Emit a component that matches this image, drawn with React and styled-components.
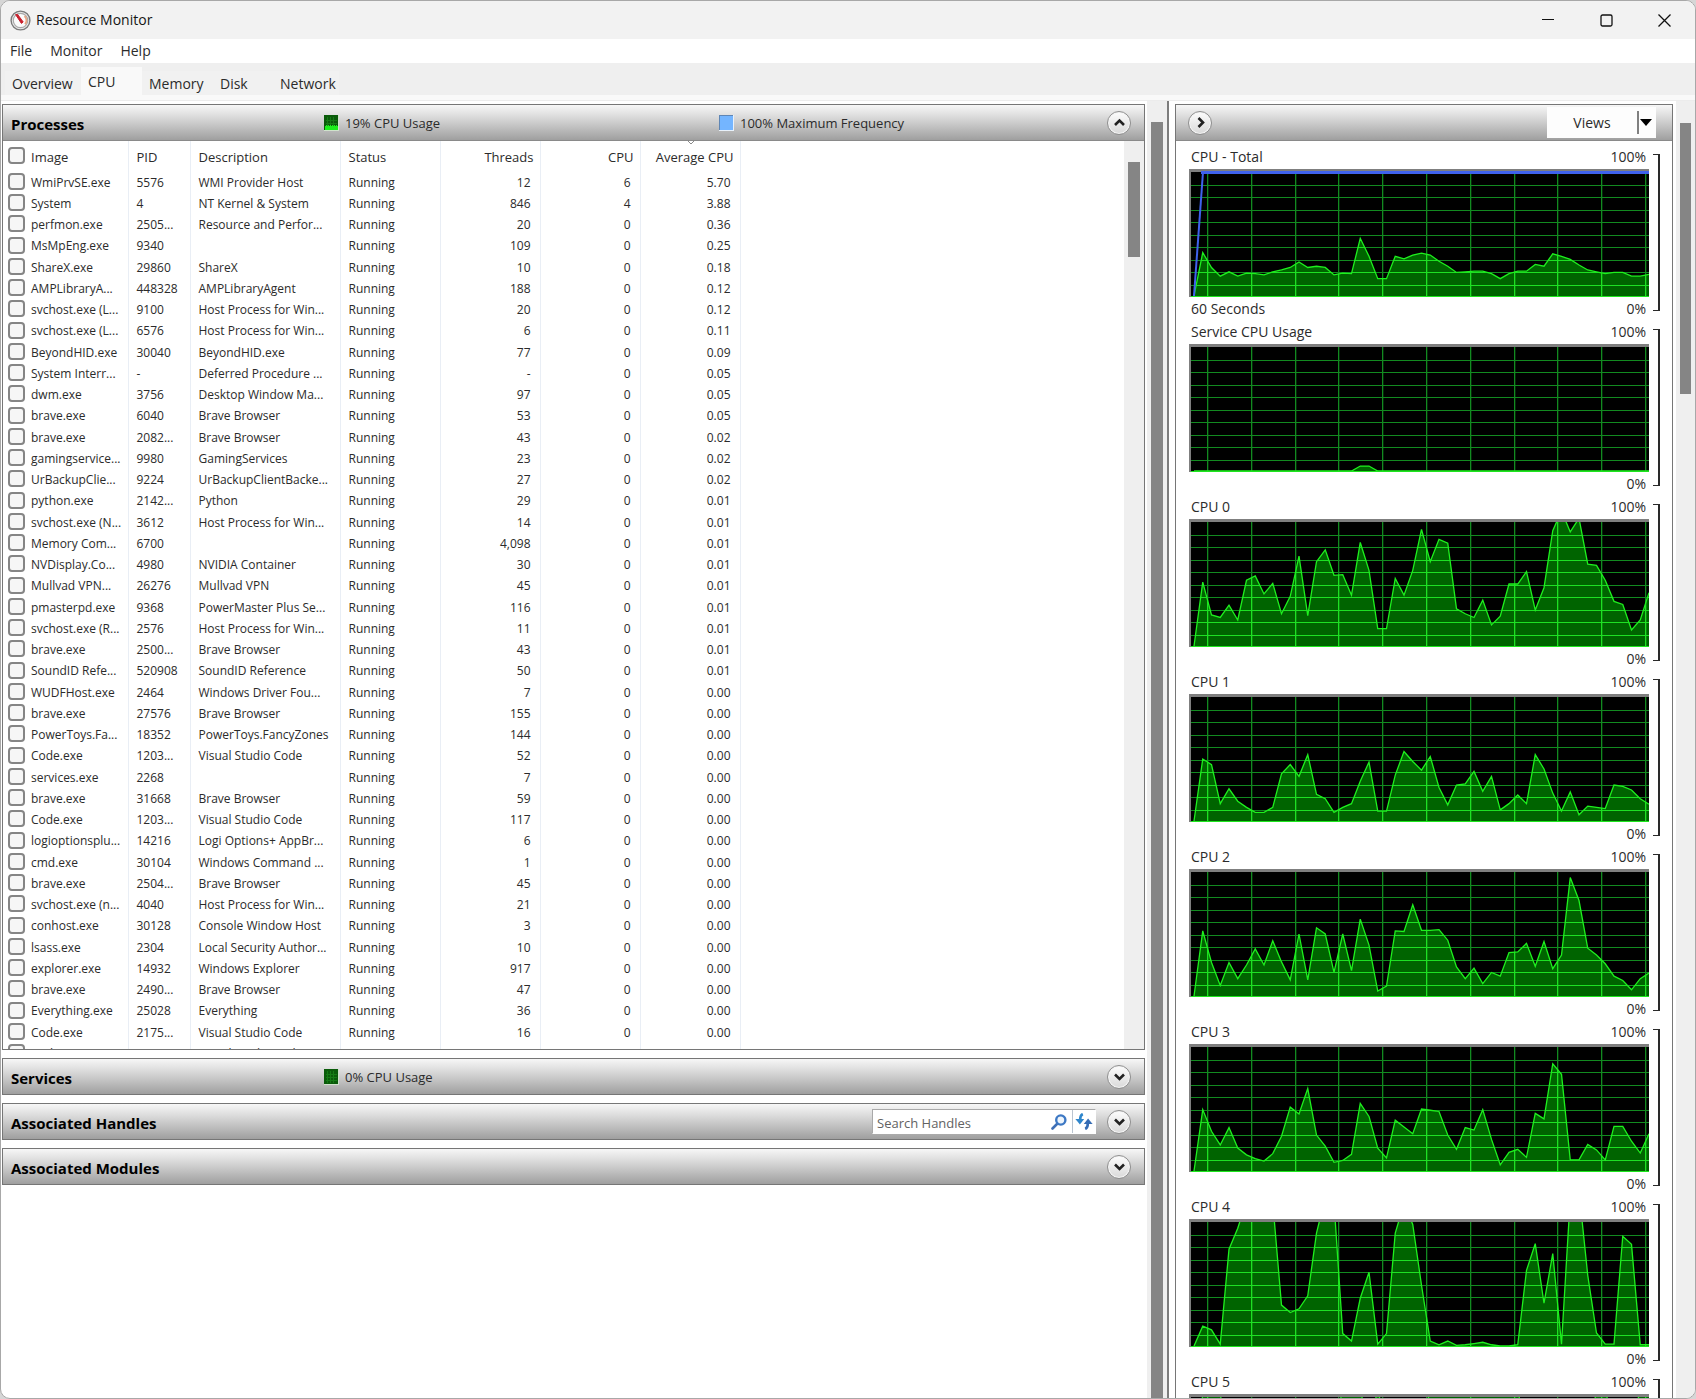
import React, { useId } from "react";
import styled, { createGlobalStyle, css } from "styled-components";

const GlobalStyle = createGlobalStyle`
  *, *::before, *::after { box-sizing: border-box; }
  html, body { margin: 0; height: 100%; }
  #root { height: 100%; }
  body {
    background: #d6d6d6;
    color: #2b2b2b;
    font-family: "Open Sans", "Noto Sans", sans-serif;
    font-size: 12px;
    line-height: 20px;
    overflow: hidden;
  }
  button, input { font: inherit; color: inherit; }
`;

/* ---------- window frame ---------- */

const Window = styled.div`
  display: flex;
  flex-direction: column;
  height: 100vh;
  border: 1px solid #a8a8a8;
  border-radius: 10px;
  background: #fff;
  overflow: hidden;
`;

const TitleBar = styled.header`
  display: flex;
  align-items: center;
  flex: 0 0 38px;
  padding: 0 2px 0 9px;
  background: #f2f2f2;
`;

const WindowTitle = styled.h1`
  flex: 1;
  margin: 0 0 0 5px;
  color: #151515;
  font-size: 14px;
  font-weight: 400;
`;

const CaptionButton = styled.button`
  display: grid;
  place-items: center;
  width: 58px;
  height: 38px;
  padding: 0;
  border: 0;
  background: none;
  color: #111;
`;

const MenuBar = styled.nav`
  display: flex;
  flex: 0 0 24px;
  background: #fff;
`;

const MenuItem = styled.button`
  padding: 0 9px;
  border: 0;
  background: none;
  font-size: 14px;
  line-height: 24px;
`;

const TabStrip = styled.div`
  display: flex;
  align-items: flex-end;
  flex: 0 0 32px;
  padding-left: 4px;
  background: #efefef;
`;

const Tab = styled.button`
  height: 24px;
  min-width: ${(p) => p.$width}px;
  padding: 2px 0 0 7px;
  border: 0;
  background: #f1f1f1;
  font-size: 14px;
  line-height: 22px;
  text-align: left;
  white-space: nowrap;
  ${(p) =>
    p.$active &&
    css`
      height: 28px;
      background: #f9f9f9;
    `}
`;

const TabEdge = styled.div`
  flex: 0 0 6px;
  background: #f9f9f9;
  border-bottom: 1px solid #ececec;
`;

const Content = styled.main`
  display: grid;
  grid-template-columns: minmax(0, 1fr) 528px;
  flex: 1;
  min-height: 0;
`;

/* ---------- scroll bars ---------- */

const ScrollTrack = styled.div`
  flex: 0 0 ${(p) => p.$width}px;
  padding: ${(p) => p.$top}px 4px ${(p) => p.$bottom || 0}px;
  background: #efefef;
`;

const ScrollThumb = styled.div`
  height: ${(p) => p.$height};
  background: #858585;
`;

/* ---------- left side ---------- */

const LeftSide = styled.div`
  display: flex;
  min-width: 0;
`;

const Sections = styled.div`
  display: flex;
  flex-direction: column;
  flex: 1;
  gap: 8px;
  min-width: 0;
  padding: 3px 2px 0 1px;
`;

const Section = styled.section`
  border: 1px solid #767676;
  background: #fff;
`;

const barFill = css`
  background: linear-gradient(#f7f7f7 0%, #dedede 30%, #bfbfbf 65%, #9f9f9f 100%);
`;

const SectionBar = styled.div`
  display: grid;
  grid-template-columns: 313px 395px 1fr auto;
  align-items: center;
  height: 35px;
  padding: 0 13px 0 8px;
  ${barFill}
`;

const SectionTitle = styled.h2`
  margin: 0;
  padding-top: 2px;
  color: #000;
  font-size: 15px;
  font-weight: 700;
  white-space: nowrap;
`;

const Legend = styled.span`
  display: flex;
  align-items: center;
  gap: 6px;
  font-size: 13px;
`;

const BarTools = styled.div`
  grid-column: 4;
  display: flex;
  align-items: center;
  gap: 11px;
`;

const RoundButton = styled.button`
  display: grid;
  place-items: center;
  width: 24px;
  height: 24px;
  padding: 0;
  border: 1px solid #8f8f8f;
  border-radius: 50%;
  background: linear-gradient(#fdfdfd, #d9d9d9);
  box-shadow: inset 0 0 0 1px #f4f4f4;
  color: #222;
`;

const SearchBox = styled.form`
  display: flex;
  align-items: center;
  width: 224px;
  height: 25px;
  border: 1px solid #a9a9a9;
  border-right-color: #fff;
  border-bottom-color: #fff;
  background: #fff;
`;

const SearchInput = styled.input`
  flex: 1;
  min-width: 0;
  height: 23px;
  padding: 2px 0 0 4px;
  border: 0;
  outline: 0;
  background: none;
  font-size: 13px;
  &::placeholder { color: #626262; opacity: 1; }
`;

const SearchAction = styled.button`
  display: grid;
  place-items: center;
  width: ${(p) => p.$width}px;
  height: 23px;
  padding: 0;
  border: 0;
  border-left: 1px solid ${(p) => (p.$divided ? "#b9c4d0" : "transparent")};
  background: none;
`;

/* ---------- process table ---------- */

const TableView = styled.div`
  display: flex;
  height: 909px;
  border-top: 1px solid #8a8a8a;
  overflow: hidden;
`;

const TableArea = styled.div`
  flex: 1;
  min-width: 0;
  overflow: hidden;
`;

const Table = styled.table`
  table-layout: fixed;
  width: 737px;
  border-collapse: collapse;
`;

const Row = styled.tr`
  height: 21px;
  &:nth-child(4n) { height: 22px; }
`;

const HeadRow = styled.tr`
  height: 31px;
`;

const cell = css`
  padding: 0 ${(p) => (p.$num ? p.$right : 0)}px 0 ${(p) => (p.$first ? 5 : 8)}px;
  border-right: 1px solid #e9eef5;
  font-weight: 400;
  line-height: 20px;
  text-align: ${(p) => (p.$num ? "right" : "left")};
  white-space: nowrap;
  overflow: hidden;
`;

const Th = styled.th`
  position: relative;
  ${cell}
  font-size: 13px;
`;
const Td = styled.td`
  ${cell}
`;

const SortMark = styled.svg`
  position: absolute;
  top: 0;
  left: 46px;
`;

const CheckLabel = styled.label`
  display: flex;
  align-items: center;
  gap: 6px;
`;

const Check = styled.input`
  appearance: none;
  flex: none;
  width: 17px;
  height: 17px;
  margin: 0 0 2px;
  border: 2px solid #858585;
  border-radius: 4px;
  background: #f6f6f6;
`;

/* ---------- right side ---------- */

const RightSide = styled.aside`
  display: flex;
  min-width: 0;
`;

const Splitter = styled.div`
  flex: 0 0 2px;
  margin-right: 6px;
  background: #7d7d7d;
`;

const GraphPanel = styled.section`
  flex: 1;
  min-width: 0;
  margin: 3px 3px 0 0;
  border: 1px solid #767676;
  border-bottom: 0;
  overflow: hidden;
`;

const GraphBar = styled.div`
  display: flex;
  align-items: center;
  justify-content: space-between;
  height: 36px;
  padding: 0 16px 0 12px;
  border-bottom: 1px solid #8a8a8a;
  ${barFill}
`;

const ViewsSplit = styled.div`
  display: flex;
  align-items: center;
  width: 109px;
  height: 31px;
  background: #fdfdfd;
`;

const ViewsButton = styled.button`
  flex: 1;
  padding: 0;
  border: 0;
  background: none;
  font-size: 14px;
`;

const ViewsArrow = styled.button`
  display: flex;
  align-items: center;
  width: 19px;
  height: 23px;
  padding: 0 0 0 1px;
  border: 0;
  border-left: 2px solid #808080;
  background: none;
`;

const Graphs = styled.div`
  padding: 4px 12px 0 13px;
`;

const Graph = styled.figure`
  display: grid;
  grid-template-columns: minmax(0, 1fr) 8px;
  grid-template-rows: 24px 128px 23px;
  column-gap: 3px;
  margin: 0;
`;

const GraphText = styled.div`
  display: flex;
  justify-content: space-between;
  align-items: center;
  grid-column: 1;
  padding: 0 3px 0 2px;
  font-size: ${(p) => p.$size || 14}px;
`;

const GraphSvg = styled.svg`
  display: block;
  grid-column: 1;
  width: 100%;
  height: 128px;
`;

const Bracket = styled.div`
  grid-column: 2;
  grid-row: 1 / 4;
  margin: 9px 0 9px 1px;
  border: solid #2a2a2a;
  border-width: 1px 2px 1px 0;
`;

/* ---------- data ---------- */

const PROCESSES = [
  ["WmiPrvSE.exe", "5576", "WMI Provider Host", "12", "6", "5.70"],
  ["System", "4", "NT Kernel & System", "846", "4", "3.88"],
  ["perfmon.exe", "2505...", "Resource and Perfor...", "20", "0", "0.36"],
  ["MsMpEng.exe", "9340", "", "109", "0", "0.25"],
  ["ShareX.exe", "29860", "ShareX", "10", "0", "0.18"],
  ["AMPLibraryA...", "448328", "AMPLibraryAgent", "188", "0", "0.12"],
  ["svchost.exe (L...", "9100", "Host Process for Win...", "20", "0", "0.12"],
  ["svchost.exe (L...", "6576", "Host Process for Win...", "6", "0", "0.11"],
  ["BeyondHID.exe", "30040", "BeyondHID.exe", "77", "0", "0.09"],
  ["System Interr...", "-", "Deferred Procedure ...", "-", "0", "0.05"],
  ["dwm.exe", "3756", "Desktop Window Ma...", "97", "0", "0.05"],
  ["brave.exe", "6040", "Brave Browser", "53", "0", "0.05"],
  ["brave.exe", "2082...", "Brave Browser", "43", "0", "0.02"],
  ["gamingservice...", "9980", "GamingServices", "23", "0", "0.02"],
  ["UrBackupClie...", "9224", "UrBackupClientBacke...", "27", "0", "0.02"],
  ["python.exe", "2142...", "Python", "29", "0", "0.01"],
  ["svchost.exe (N...", "3612", "Host Process for Win...", "14", "0", "0.01"],
  ["Memory Com...", "6700", "", "4,098", "0", "0.01"],
  ["NVDisplay.Co...", "4980", "NVIDIA Container", "30", "0", "0.01"],
  ["Mullvad VPN...", "26276", "Mullvad VPN", "45", "0", "0.01"],
  ["pmasterpd.exe", "9368", "PowerMaster Plus Se...", "116", "0", "0.01"],
  ["svchost.exe (R...", "2576", "Host Process for Win...", "11", "0", "0.01"],
  ["brave.exe", "2500...", "Brave Browser", "43", "0", "0.01"],
  ["SoundID Refe...", "520908", "SoundID Reference", "50", "0", "0.01"],
  ["WUDFHost.exe", "2464", "Windows Driver Fou...", "7", "0", "0.00"],
  ["brave.exe", "27576", "Brave Browser", "155", "0", "0.00"],
  ["PowerToys.Fa...", "18352", "PowerToys.FancyZones", "144", "0", "0.00"],
  ["Code.exe", "1203...", "Visual Studio Code", "52", "0", "0.00"],
  ["services.exe", "2268", "", "7", "0", "0.00"],
  ["brave.exe", "31668", "Brave Browser", "59", "0", "0.00"],
  ["Code.exe", "1203...", "Visual Studio Code", "117", "0", "0.00"],
  ["logioptionsplu...", "14216", "Logi Options+ AppBr...", "6", "0", "0.00"],
  ["cmd.exe", "30104", "Windows Command ...", "1", "0", "0.00"],
  ["brave.exe", "2504...", "Brave Browser", "45", "0", "0.00"],
  ["svchost.exe (n...", "4040", "Host Process for Win...", "21", "0", "0.00"],
  ["conhost.exe", "30128", "Console Window Host", "3", "0", "0.00"],
  ["lsass.exe", "2304", "Local Security Author...", "10", "0", "0.00"],
  ["explorer.exe", "14932", "Windows Explorer", "917", "0", "0.00"],
  ["brave.exe", "2490...", "Brave Browser", "47", "0", "0.00"],
  ["Everything.exe", "25028", "Everything", "36", "0", "0.00"],
  ["Code.exe", "2175...", "Visual Studio Code", "16", "0", "0.00"],
  ["Code.exe", "", "Visual Studio Code", "", "", ""],
];

const COLUMN_WIDTHS = [125, 62, 150, 100, 100, 100, 100];

/* CPU load in percent, one sample each step */
const GRAPHS = [
  {
    name: "CPU - Total",
    note: "60 Seconds",
    frequency: true,
    data: [0, 35, 23, 16, 19.5, 16, 18.5, 18, 17, 19.5, 21, 23, 27.5, 23, 24, 23, 17, 18.5, 18, 46.5, 32, 14, 14, 32, 30, 33, 34.5, 33, 28, 24, 19, 19.5, 20, 20, 18, 14, 18, 20, 20, 25.5, 24, 34, 32, 29.5, 25, 21, 19.5, 18, 19, 19, 16, 16, 17.5],
  },
  {
    name: "Service CPU Usage",
    data: [0, 0, 0, 0, 0, 0, 0, 0, 0, 0, 0, 0, 0, 0, 0, 0, 0, 0, 0, 4, 4, 0, 0, 0, 0, 0, 0, 0, 0, 0, 0, 0, 0, 0, 0, 0, 0, 0, 0, 0, 0, 0, 0, 0, 0, 0, 0, 0, 0, 0, 0, 0, 0],
  },
  {
    name: "CPU 0",
    data: [0, 51.5, 25, 23, 33, 21, 53, 56.5, 42, 50.5, 26, 40, 72.5, 24.5, 68, 77.5, 57, 57.5, 41, 83.5, 61, 14, 14, 54.5, 41, 61, 94, 68, 86, 83, 30, 26, 23, 37, 17, 24, 50, 50, 60, 29, 47, 93, 109, 92, 103, 66, 65, 53, 36, 33.5, 13, 21, 43],
  },
  {
    name: "CPU 1",
    data: [0, 50, 45.5, 14, 26, 16, 11, 7, 7, 11, 38, 45.5, 36, 53.5, 21.5, 18, 7, 11, 14, 32, 47.5, 8, 8, 37, 56, 48, 41, 52, 27, 13, 29, 30, 40, 24, 36, 9, 14, 21, 14, 53.5, 42, 22.5, 8, 23.5, 5, 12, 11, 10, 29, 28, 25, 18, 13.5],
  },
  {
    name: "CPU 2",
    data: [0, 52.5, 27, 8.5, 27, 14, 25, 38, 25, 44.5, 27.5, 13, 50, 13, 55, 50, 19, 50, 20.5, 62, 41, 4, 8, 52.5, 52, 73.5, 53, 53, 53.5, 45, 23.5, 14, 22.5, 10, 19, 16, 35, 35.5, 42.5, 24, 44, 22, 33, 95.5, 77, 38.5, 33, 26, 16, 12.5, 5, 14, 18.5],
  },
  {
    name: "CPU 3",
    data: [0, 49.5, 32, 21, 35, 18.5, 13, 10, 8, 14, 28, 51.5, 46, 66.5, 29, 20, 7, 8.5, 13.5, 54.5, 44, 18.5, 10.5, 41, 35.5, 30, 50, 49, 48, 29, 17.5, 35, 33, 49.5, 25.5, 5, 15, 17.5, 11, 46.5, 42, 86.5, 78, 9, 9, 21.5, 17, 9, 36, 36, 24, 14.5, 30],
  },
  {
    name: "CPU 4",
    data: [0, 16, 13, 1.5, 78, 95, 117, 110, 110, 116, 33, 27, 30, 40.5, 91, 120, 116, 10, 4, 38.5, 59.5, 1.5, 10, 91, 115, 98, 49, 4, 1, 4, 0.5, 1, 2, 3, 1, 0, 0, 1, 61, 82.5, 34.5, 74.5, 1.5, 119, 125, 57, 10.5, 1.5, 1.5, 88.5, 82, 1, 1],
  },
  {
    name: "CPU 5",
    data: [0, 104, 110, 104, 40, 20, 18, 16, 20, 24, 30, 22, 26, 30, 35, 40, 60, 110, 110, 110, 60, 110, 60, 40, 60, 80, 60, 110, 115, 115, 115, 115, 115, 115, 115, 115, 110, 108, 60, 40, 30, 40, 50, 60, 40, 50, 108, 110, 60, 40, 60, 110, 110],
  },
];

/* ---------- drawings ---------- */

const CHART_W = 460;
const CHART_H = 128;
const px = (i) => 5 + i * 8.75;
const py = (v) => CHART_H - 1 - v * 1.24;

function Chart({ name, data, frequency }) {
  const id = useId();
  const line = data.map((v, i) => `${px(i)},${py(v)}`).join(" ");
  const area = `${px(0)},${CHART_H} ${line} ${px(data.length - 1)},${CHART_H}`;
  const columns = Array.from({ length: 11 }, (_, i) => Math.round(19 + i * 43.8));
  const rows = Array.from({ length: 9 }, (_, i) => Math.round(CHART_H - 12.5 * (i + 1)));
  const grid = (
    <>
      {columns.map((x) => (
        <rect key={"c" + x} x={x - 1} y="3" width="1.3" height={CHART_H} />
      ))}
      {rows.map((y) => (
        <rect key={"r" + y} x="2" y={y} width={CHART_W} height="1" />
      ))}
    </>
  );
  return (
    <GraphSvg viewBox={`0 0 ${CHART_W} ${CHART_H}`} preserveAspectRatio="none" role="img" aria-label={name}>
      <defs>
        <clipPath id={id + "a"}>
          <polygon points={area} />
        </clipPath>
        <clipPath id={id + "b"}>
          <rect x="2" y="3" width={CHART_W - 2} height={CHART_H - 3} />
        </clipPath>
      </defs>
      <rect width={CHART_W} height={CHART_H} fill="#7f7f7f" />
      <g clipPath={`url(#${id}b)`}>
        <rect x="2" y="3" width={CHART_W} height={CHART_H} fill="#000" />
        <g fill="#128a20">{grid}</g>
        <polygon points={area} fill="#006400" />
        <g clipPath={`url(#${id}a)`} fill="#1ee024">
          {grid}
        </g>
        <polyline points={line} fill="none" stroke="#1ef01e" strokeWidth="1.3" />
        <rect x="2" y={CHART_H - 1} width={CHART_W} height="1" fill="#1ee61e" />
      </g>
      {frequency && (
        <g>
          <rect x="12" y="2" width={CHART_W} height="3" fill="#3f62ee" />
          <polyline points="5,127 14,3" fill="none" stroke="#3f62ee" strokeWidth="2" />
        </g>
      )}
    </GraphSvg>
  );
}

const CHEVRONS = {
  up: "M2 9 L6.5 4.5 L11 9",
  down: "M2 4.5 L6.5 9 L11 4.5",
  right: "M4.5 2 L9 6.5 L4.5 11",
};

function RoundToggle({ direction, label }) {
  return (
    <RoundButton type="button" aria-label={label}>
      <svg width="13" height="13" viewBox="0 0 13 13" aria-hidden="true">
        <path d={CHEVRONS[direction]} fill="none" stroke="currentColor" strokeWidth="2.6" />
      </svg>
    </RoundButton>
  );
}

function GaugeIcon() {
  return (
    <svg width="21" height="21" viewBox="0 0 21 21" aria-hidden="true">
      <circle cx="10.5" cy="10.5" r="9.4" fill="#e9e9e9" stroke="#7c7c7c" strokeWidth="1.4" />
      <circle cx="10.5" cy="10.5" r="7.2" fill="#fbfbfb" stroke="#a9a9a9" strokeWidth="1.2" />
      <path d="M14.5 6 A5.8 5.8 0 0 1 15 14.2" fill="none" stroke="#e8a583" strokeWidth="1.8" />
      <path d="M5.6 4.6 L7.6 4.4 L13.2 12 L11.4 13.4 Z" fill="#c81e2b" stroke="#c81e2b" strokeWidth="1" />
    </svg>
  );
}

function UsageIcon({ loaded }) {
  return (
    <svg width="15" height="16" viewBox="0 0 15 16" aria-hidden="true">
      <rect width="15" height="16" fill="#cfe3cb" />
      <rect width="14" height="15" fill="#0a5c0a" />
      <path d="M3.5 2V14M6.5 2V14M9.5 2V14M2 5.5H13M2 8.5H13M2 11.5H13" stroke="#1b8a1b" strokeWidth="1" opacity="0.7" />
      {loaded && <path d="M1 15V11H2V10H3V11H4V10H5V11H6V10H7V11H8V10H9V11H10V10H11V11H12V10H13V11H14V15Z" fill="#1bef1b" />}
    </svg>
  );
}

function FrequencyIcon() {
  return (
    <svg width="15" height="16" viewBox="0 0 15 16" aria-hidden="true">
      <rect width="15" height="16" fill="#e8f1fa" />
      <rect width="14" height="15" fill="#5f86b5" />
      <rect x="1" y="1" width="13" height="14" fill="#74b5ff" />
    </svg>
  );
}

function SearchIcon() {
  return (
    <svg width="16" height="16" viewBox="0 0 16 16" aria-hidden="true">
      <path d="M1.5 14.5 L6.5 9.5" stroke="#3f6fb5" strokeWidth="2.6" strokeLinecap="round" />
      <circle cx="9.8" cy="6" r="4.6" fill="#eef5fc" stroke="#3d78c4" strokeWidth="2.4" />
    </svg>
  );
}

function RefreshIcon() {
  return (
    <svg width="18" height="17" viewBox="0 0 18 17" aria-hidden="true">
      <path d="M7.8 1 Q4.8 2.4 5.2 8" fill="none" stroke="#2f86cc" strokeWidth="2.6" />
      <path d="M0.4 6 H9.2 L4.9 11.4 Z" fill="#2f86cc" />
      <path d="M10.2 16 Q13.2 14.6 12.8 9" fill="none" stroke="#356cb4" strokeWidth="2.6" />
      <path d="M8.8 11 H17.6 L13.1 5.6 Z" fill="#356cb4" />
    </svg>
  );
}

/* ---------- parts ---------- */

function ProcessRow({ row }) {
  const [image, pid, description, threads, cpu, average] = row;
  return (
    <Row>
      <Td $first>
        <CheckLabel>
          <Check type="checkbox" />
          {image}
        </CheckLabel>
      </Td>
      <Td>{pid}</Td>
      <Td>{description}</Td>
      <Td>{threads && "Running"}</Td>
      <Td $num $right={9}>{threads}</Td>
      <Td $num $right={9}>{cpu}</Td>
      <Td $num $right={9}>{average}</Td>
    </Row>
  );
}

function ProcessTable() {
  return (
    <Table>
      <colgroup>
        {COLUMN_WIDTHS.map((w, i) => (
          <col key={i} width={w} />
        ))}
      </colgroup>
      <thead>
        <HeadRow>
          <Th $first scope="col">
            <CheckLabel>
              <Check type="checkbox" />
              Image
            </CheckLabel>
          </Th>
          <Th scope="col">PID</Th>
          <Th scope="col">Description</Th>
          <Th scope="col">Status</Th>
          <Th scope="col" $num $right={6}>Threads</Th>
          <Th scope="col" $num $right={6}>CPU</Th>
          <Th scope="col" $num $right={6} aria-sort="descending">
            <SortMark width="8" height="4" viewBox="0 0 8 4" aria-hidden="true">
              <path d="M1 0 L4 3 L7 0" fill="none" stroke="#8a8a8a" />
            </SortMark>
            Average CPU
          </Th>
        </HeadRow>
      </thead>
      <tbody>
        {PROCESSES.map((row, i) => (
          <ProcessRow key={i} row={row} />
        ))}
      </tbody>
    </Table>
  );
}

const TABS = [
  ["Overview", 76],
  ["CPU", 61],
  ["Memory", 71],
  ["Disk", 60],
  ["Network", 66],
];

export default function App() {
  return (
    <>
      <GlobalStyle />
      <Window>
        <TitleBar>
          <GaugeIcon />
          <WindowTitle>Resource Monitor</WindowTitle>
          <CaptionButton type="button" aria-label="Minimize">
            <svg width="12" height="12" viewBox="0 0 12 12">
              <path d="M0 5.5H12" stroke="currentColor" />
            </svg>
          </CaptionButton>
          <CaptionButton type="button" aria-label="Maximize">
            <svg width="13" height="13" viewBox="0 0 13 13">
              <rect x="1" y="1" width="11" height="11" rx="1.5" fill="none" stroke="currentColor" strokeWidth="1.3" />
            </svg>
          </CaptionButton>
          <CaptionButton type="button" aria-label="Close">
            <svg width="13" height="13" viewBox="0 0 13 13">
              <path d="M0.5 0.5L12.5 12.5M12.5 0.5L0.5 12.5" stroke="currentColor" strokeWidth="1.3" />
            </svg>
          </CaptionButton>
        </TitleBar>
        <MenuBar>
          <MenuItem type="button">File</MenuItem>
          <MenuItem type="button">Monitor</MenuItem>
          <MenuItem type="button">Help</MenuItem>
        </MenuBar>
        <TabStrip role="tablist">
          {TABS.map(([name, width]) => (
            <Tab key={name} type="button" role="tab" aria-selected={name === "CPU"} $active={name === "CPU"} $width={width}>
              {name}
            </Tab>
          ))}
        </TabStrip>
        <TabEdge />
        <Content>
          <LeftSide>
            <Sections>
              <Section>
                <SectionBar>
                  <SectionTitle>Processes</SectionTitle>
                  <Legend>
                    <UsageIcon loaded />
                    19% CPU Usage
                  </Legend>
                  <Legend>
                    <FrequencyIcon />
                    100% Maximum Frequency
                  </Legend>
                  <BarTools>
                    <RoundToggle direction="up" label="Collapse Processes" />
                  </BarTools>
                </SectionBar>
                <TableView>
                  <TableArea>
                    <ProcessTable />
                  </TableArea>
                  <ScrollTrack $width={20} $top={21}>
                    <ScrollThumb $height="95px" />
                  </ScrollTrack>
                </TableView>
              </Section>
              <Section>
                <SectionBar>
                  <SectionTitle>Services</SectionTitle>
                  <Legend>
                    <UsageIcon />
                    0% CPU Usage
                  </Legend>
                  <BarTools>
                    <RoundToggle direction="down" label="Expand Services" />
                  </BarTools>
                </SectionBar>
              </Section>
              <Section>
                <SectionBar>
                  <SectionTitle>Associated Handles</SectionTitle>
                  <BarTools>
                    <SearchBox onSubmit={(e) => e.preventDefault()}>
                      <SearchInput type="text" placeholder="Search Handles" aria-label="Search Handles" />
                      <SearchAction type="submit" $width={28} aria-label="Search">
                        <SearchIcon />
                      </SearchAction>
                      <SearchAction type="button" $width={23} $divided aria-label="Refresh">
                        <RefreshIcon />
                      </SearchAction>
                    </SearchBox>
                    <RoundToggle direction="down" label="Expand Associated Handles" />
                  </BarTools>
                </SectionBar>
              </Section>
              <Section>
                <SectionBar>
                  <SectionTitle>Associated Modules</SectionTitle>
                  <BarTools>
                    <RoundToggle direction="down" label="Expand Associated Modules" />
                  </BarTools>
                </SectionBar>
              </Section>
            </Sections>
            <ScrollTrack $width={20} $top={21} $bottom={23}>
              <ScrollThumb $height="100%" />
            </ScrollTrack>
          </LeftSide>
          <RightSide>
            <Splitter />
            <GraphPanel>
              <GraphBar>
                <RoundToggle direction="right" label="Hide graphs" />
                <ViewsSplit>
                  <ViewsButton type="button">Views</ViewsButton>
                  <ViewsArrow type="button" aria-label="Choose view">
                    <svg width="12" height="8" viewBox="0 0 12 8" aria-hidden="true">
                      <path d="M0 0H12L6 7Z" fill="#000" />
                    </svg>
                  </ViewsArrow>
                </ViewsSplit>
              </GraphBar>
              <Graphs>
                {GRAPHS.map((g) => (
                  <Graph key={g.name}>
                    <GraphText>
                      <figcaption>{g.name}</figcaption>
                      <span>100%</span>
                    </GraphText>
                    <Chart {...g} />
                    <GraphText>
                      <span>{g.note}</span>
                      <span>0%</span>
                    </GraphText>
                    <Bracket />
                  </Graph>
                ))}
              </Graphs>
            </GraphPanel>
            <ScrollTrack $width={19} $top={22}>
              <ScrollThumb $height="271px" />
            </ScrollTrack>
          </RightSide>
        </Content>
      </Window>
    </>
  );
}
